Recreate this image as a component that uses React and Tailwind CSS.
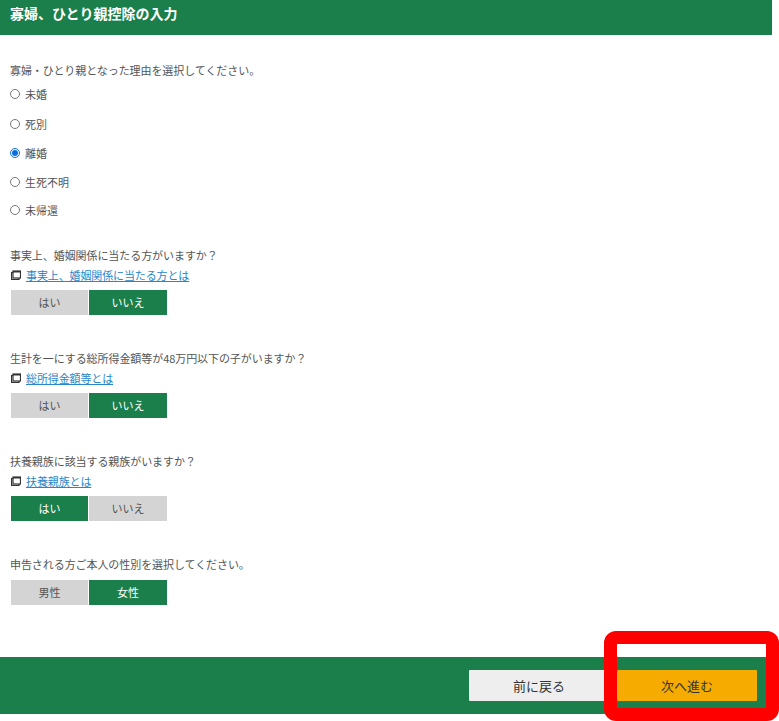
const font = { fontFamily: '"Noto Sans CJK JP", "Liberation Sans", sans-serif' };

function Radio({ label, checked, className }) {
  return (
    <label className={`flex items-center h-[20px] text-[11px] text-[#555] ${className || ''}`}>
      <input type="radio" name="reason" defaultChecked={checked} className="m-0 w-[10px] h-[10px] ml-[10px] mr-[5px] accent-[#0b6fe0]" />
      <span>{label}</span>
    </label>
  );
}

function ExtLink({ children }) {
  return (
    <div className="flex items-center h-[18px] pl-[11px] text-[11px] tracking-[-0.12px]">
      <svg width="10" height="10" viewBox="0 0 10 10" className="mr-[5px]">
        <rect x="0.5" y="2.5" width="7.5" height="7" fill="none" stroke="#333" strokeWidth="1.2" />
        <rect x="2" y="1" width="7.5" height="7" fill="#fff" stroke="#333" strokeWidth="1.2" />
        <rect x="2" y="1" width="7.5" height="1.5" fill="#333" />
      </svg>
      <a className="text-[#2a86c8] underline">{children}</a>
    </div>
  );
}

function Toggle({ left, right, active }) {
  const on = 'bg-[#1a7f4b] text-white';
  const off = 'bg-[#d4d4d4] text-[#555]';
  return (
    <div className="flex ml-[11px] gap-[1px] text-[11px]">
      <div className={`w-[77px] h-[25px] flex items-center justify-center ${active === 0 ? on : off}`}>{left}</div>
      <div className={`w-[78px] h-[25px] flex items-center justify-center ${active === 1 ? on : off}`}>{right}</div>
    </div>
  );
}

function Q({ children, className }) {
  return <p className={`pl-[10px] text-[11px] leading-[18px] text-[#555] tracking-[-0.07px] ${className || ''}`}>{children}</p>;
}

export default function App() {
  return (
    <div className="relative w-[779px] h-[721px] bg-white overflow-hidden" style={font}>
      <div className="w-[772px]">
        <header className="h-[35px] bg-[#1a7f4b] pl-[10px] pb-[9px] flex items-center text-white text-[14px] font-bold">寡婦、ひとり親控除の入力</header>
        <Q className="mt-[26px]">寡婦・ひとり親となった理由を選択してください。</Q>
        <div className="mt-[5px] flex flex-col">
          <Radio label="未婚" />
          <Radio label="死別" className="mt-[10px]" />
          <Radio label="離婚" checked className="mt-[9px]" />
          <Radio label="生死不明" className="mt-[9px]" />
          <Radio label="未帰還" className="mt-[8px]" />
        </div>
        <Q className="mt-[26px]">事実上、婚姻関係に当たる方がいますか？</Q>
        <div className="mt-[2px]"><ExtLink>事実上、婚姻関係に当たる方とは</ExtLink></div>
        <div className="mt-[6px]"><Toggle left="はい" right="いいえ" active={1} /></div>
        <Q className="mt-[34px]">生計を一にする総所得金額等が48万円以下の子がいますか？</Q>
        <div className="mt-[2px]"><ExtLink>総所得金額等とは</ExtLink></div>
        <div className="mt-[6px]"><Toggle left="はい" right="いいえ" active={1} /></div>
        <Q className="mt-[34px]">扶養親族に該当する親族がいますか？</Q>
        <div className="mt-[2px]"><ExtLink>扶養親族とは</ExtLink></div>
        <div className="mt-[6px]"><Toggle left="はい" right="いいえ" active={0} /></div>
        <Q className="mt-[34px]">申告される方ご本人の性別を選択してください。</Q>
        <div className="mt-[7px]"><Toggle left="男性" right="女性" active={1} /></div>
        <footer className="mt-[52px] h-[57px] bg-[#1a7f4b] flex items-center justify-end gap-[8px] pr-[15px] text-[13px]">
          <button className="w-[140px] h-[31px] bg-[#eeeeee] text-[#333] rounded-[1px]">前に戻る</button>
          <button className="w-[140px] h-[31px] bg-[#f5ab00] text-[#333] rounded-[1px]">次へ進む</button>
        </footer>
      </div>
      <div className="absolute left-[604px] top-[631px] w-[175px] h-[90px] border-[13px] border-[#ff0000] rounded-[12px]"></div>
    </div>
  );
}
